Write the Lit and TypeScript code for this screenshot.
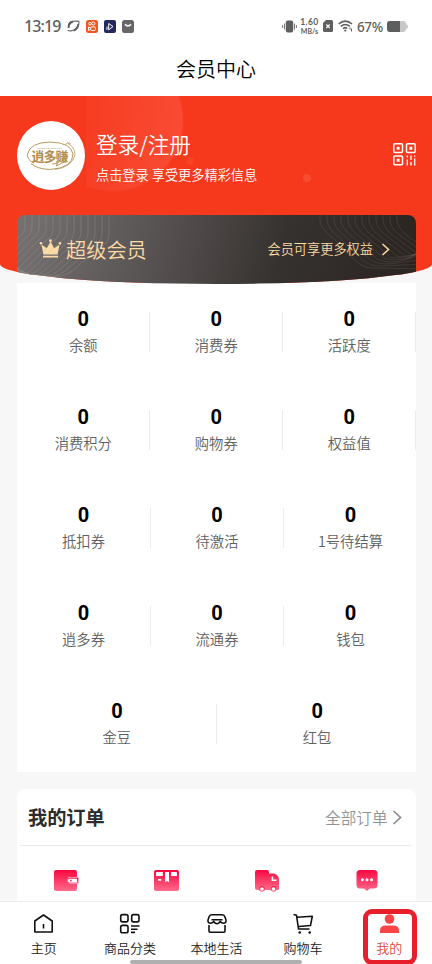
import { LitElement, html, css, svg } from "lit";
import { customElement } from "lit/decorators.js";
import { classMap } from "lit/directives/class-map.js";

const statRows: string[][] = [
  ["余额", "消费券", "活跃度"],
  ["消费积分", "购物券", "权益值"],
  ["抵扣券", "待激活", "1号待结算"],
  ["逍多券", "流通券", "钱包"],
  ["金豆", "红包"],
];

const orderIcons = [
  svg`<path d="M3 1H22Q24 1 24 3V8H17Q14.500 8 14.500 11.200Q14.500 14.500 17 14.500H24V20Q24 22 22 22H3Q1 22 1 20V3Q1 1 3 1Z"/><path d="M17 8.500H25.500V14.500H17Q14.600 14.500 14.600 11.500Q14.600 8.500 17 8.500Z"/><path class="cut" d="M16.200 9.800H24V13.400H16.200Q15 13.400 15 11.600Q15 9.800 16.200 9.800Z"/><rect x="17" y="10.800" width="1.700" height="1.700"/>`,
  svg`<path d="M3 1H24Q26 1 26 3V20Q26 22 24 22H3Q1 22 1 20V3Q1 1 3 1Z"/><path class="cut" d="M4 3H9.800V7H3V4Q3 3 4 3ZM12 3H16V13.200L14 12L12 13.200ZM18 3H23Q24 3 24 4V7H18ZM5 10H8.200V11.800H5Z"/>`,
  svg`<path d="M3 1H13Q15 1 15 3V4.500H20Q25 6 25 11V20Q25 21 24 21H3Q1 21 1 19V3Q1 1 3 1Z"/><circle cx="8" cy="20" r="2.800"/><circle cx="19.500" cy="20" r="2.800"/><circle class="cut" cx="8" cy="20" r="1.800"/><circle class="cut" cx="19.500" cy="20" r="1.800"/><path class="cut" d="M17.600 7.500H19.200V10.400H22.500V12H17.600Z"/>`,
  svg`<path d="M5 1H20Q23.500 1 23.500 4.500V16Q23.500 19.500 20 19.500H16L13 22L10 19.500H6Q2.500 19.500 2.500 16V4.500Q2.500 1 6 1Z"/><circle class="cut" cx="8.400" cy="10.700" r="1.500"/><circle class="cut" cx="13" cy="10.700" r="1.500"/><circle class="cut" cx="17.600" cy="10.700" r="1.500"/>`,
];

const tabs = [
  { label: "主页", icon: svg`<path d="M2.800 8L11.500 2L20.200 8V19H2.800ZM11.500 11V15.500"/>` },
  {
    label: "商品分类",
    icon: svg`<rect x="2.700" y="1.600" width="7.300" height="7.300" rx="1.800"/><rect x="13.700" y="1.600" width="7.300" height="7.300" rx="1.800"/><rect x="2.700" y="12.400" width="7.300" height="7.300" rx="1.800"/><path d="M13 13H21.500M13 16.200H19.500M13 19.400H17"/>`,
  },
  {
    label: "本地生活",
    icon: svg`<path d="M7 1.800H17Q19 1.800 19.800 3.500L21 7Q21.500 10 18.500 10.300Q16.500 10.300 15.200 8.500Q13.800 10.800 12 10.800Q10.200 10.800 8.800 8.500Q7.500 10.300 5.500 10.300Q2.500 10 3 7L4.200 3.500Q5 1.800 7 1.800ZM6.500 6.700H17.500M4 12V18Q4 19.200 5.200 19.200H18.800Q20 19.200 20 18V12"/>`,
  },
  {
    label: "购物车",
    icon: svg`<path d="M2.500 1.500L5.500 2.200L7.500 16H18.500M6 4.200L21.300 3.300L19.500 12.500L8 13.500"/><circle class="dot" cx="8.700" cy="19.500" r="1.300"/><circle class="dot" cx="18.700" cy="19.500" r="1.300"/>`,
  },
  { label: "我的", icon: svg`<circle class="dot" cx="12.500" cy="6" r="4.800"/><path class="dot" d="M3 20V17.500Q3 12.500 9 12.500H16Q22 12.500 22 17.500V20Z"/>`, active: true },
];

const waves = Array.from({ length: 13 }, (_, i) => {
  const d = i * 7;
  return svg`<path d="M${92 - d} -2V${20 - d * 0.1}Q${92 - d} ${27 - d * 0.1} ${84 - d} ${32 - d * 0.1}L${55 - d} 56Q${45 - d} 64 ${28 - d} 61L-4 ${58 - d * 0.5}"/>`;
});

const wavesRight = Array.from({ length: 12 }, (_, i) => {
  const d = i * 7;
  return svg`<path d="M${2 + d} -2V6Q${3 + d} 14 ${14 + d} 22L${38 + d} ${46 - d * 0.1}Q${46 + d} ${54 - d * 0.3} ${58 + d} ${53 - d * 0.3}L108 ${54 - d * 0.7}"/>`;
});

@customElement("app-root")
export class AppRoot extends LitElement {
  static styles = css`
    :host {
      display: flex;
      flex-direction: column;
      position: relative;
      width: 432px;
      height: 964px;
      overflow: hidden;
      background: #f7f7f7;
      font-family: "Noto Sans CJK SC", sans-serif;
      color: #000;
    }
    * { box-sizing: border-box; }
    svg { display: block; flex: none; }
    .status {
      flex: none;
      height: 51px;
      display: flex;
      align-items: center;
      padding: 1px 24px 0;
      background: #fff;
      color: #5e5e5e;
      font-family: Lato, sans-serif;
    }
    .time { font: 500 16px/20px "Noto Sans", sans-serif; width: 42.500px; letter-spacing: -0.900px; }
    .apps { display: flex; gap: 6px; flex: 1; align-items: center; }
    .speed { width: 21px; text-align: center; margin: 0 3px 0 2px; white-space: nowrap; }
    .speed span { display: block; }
    .speed .rate { font: 700 8.500px/9px Lato, sans-serif; letter-spacing: 0.400px; }
    .speed .unit { font: 700 7px/8px Lato, sans-serif; }
    .wifi { margin-left: 5px; }
    .percent { font: 500 13.500px/18px "Noto Sans", sans-serif; width: 26px; margin: 1px 4px 0 4px; letter-spacing: -0.400px; }
    .title {
      flex: none;
      height: 45px;
      background: #fff;
      text-align: center;
      font: 400 20px/36px "Noto Sans CJK SC DemiLight", "Noto Sans CJK SC", sans-serif;
    }
    .hero {
      flex: none;
      height: 187.500px;
      background:
        radial-gradient(circle 5px at 307px 82px, #f84c31 3.500px, transparent 4.500px),
        radial-gradient(circle 5px at 190px 65px, #f84329 3.500px, transparent 4.500px),
        linear-gradient(to right, #f6391d 86px, transparent 86px),
        radial-gradient(circle at 113px 25px, transparent 0, transparent 69px, #f6391d 71px),
        linear-gradient(100deg, #f6391d 60px, #f94c34 190px);
      border-radius: 0 0 50% 50% / 0 0 20px 20px;
      overflow: hidden;
      padding: 25px 16px 0 17px;
      color: #fff;
    }
    .user { display: flex; height: 94px; align-items: flex-start; }
    .logo { width: 68px; height: 69px; border-radius: 50%; background: #fff; flex: none; }
    .mark { font: 700 13px "Noto Sans CJK SC", sans-serif; fill: #b28d50; }
    .intro { flex: 1; padding: 7px 0 0 11px; }
    .login { font: 400 21.600px/32px "Noto Sans CJK SC DemiLight", "Noto Sans CJK SC", sans-serif; }
    .hint { font: 400 13.200px/20px "Noto Sans CJK SC DemiLight", "Noto Sans CJK SC", sans-serif; margin-top: 5px; }
    .qr { margin: 22px 0 0; }
    .vip {
      position: relative;
      height: 76px;
      border-radius: 8px;
      overflow: hidden;
      background: linear-gradient(104deg, #777272 0%, #5f5a5a 27%, #4c4746 46%, #36322f 65%, #2a2421 100%);
      display: flex;
      align-items: flex-start;
      color: #fcdba6;
      padding: 20px 26px 0 22px;
    }
    .wave { position: absolute; top: 0; fill: none; stroke: #b5aeb0; stroke-opacity: 0.240; }
    .wave.left { left: 0; }
    .wave.right { right: 0; stroke: #a0917f; stroke-opacity: 0.180; }
    .crown { margin-top: 3px; }
    .vip .name { font: 400 20.200px/30px "Noto Sans CJK SC DemiLight", "Noto Sans CJK SC", sans-serif; margin-left: 4px; flex: 1; position: relative; }
    .vip .more { font: 400 13.200px/28px "Noto Sans CJK SC DemiLight", "Noto Sans CJK SC", sans-serif; position: relative; }
    .vip .arrow { margin: 8px 0 0 8px; }
    .stats {
      flex: none;
      height: 489px;
      width: 399px;
      margin-left: 17px;
      background: #fff;
      margin-top: -0.500px;
    }
    .row { display: flex; height: 97.900px; padding-top: 24px; }
    .row.wide { margin-right: -1.500px; }
    .cell {
      flex: 1;
      display: flex;
      flex-direction: column;
      align-items: center;
      position: relative;
      padding-right: 0.500px;
    }
    .cell.ruled::after {
      content: "";
      position: absolute;
      right: 0;
      top: 5px;
      width: 1px;
      height: 40px;
      background: #ececec;
    }
    .num { font: 700 20px/24px Roboto, sans-serif; }
    .label { font: 400 14.300px/20px "Noto Sans CJK SC DemiLight", "Noto Sans CJK SC", sans-serif; margin-top: 4px; color: #606060; }
    .orders {
      flex: none;
      width: 399px;
      height: 112px;
      margin: 17px 0 0 17px;
      background: #fff;
      border-radius: 8px 8px 0 0;
    }
    .head {
      display: flex;
      align-items: center;
      height: 57px;
      margin: 0 5px 0 3px;
      padding: 0 9px 0 8px;
      border-bottom: 1px solid #ebebeb;
    }
    .head .name { flex: 1; font-size: 19.200px; font-weight: 700; color: #2c2c2c; line-height: 28px; }
    .head .all { font: 400 15.600px/24px "Noto Sans CJK SC DemiLight", "Noto Sans CJK SC", sans-serif; color: #939393; margin-right: 4.500px; }
    .kinds { display: flex; padding-top: 23px; margin: 0 -1px 0 -1px; }
    .kind { flex: 1; display: flex; justify-content: center; fill: url(#pink); }
    .cut { fill: #fff; }
    .tabs {
      flex: none;
      height: 63px;
      display: flex;
      background: #fff;
      border-top: 1px solid #ececec;
    }
    .tab { flex: 1; display: flex; flex-direction: column; align-items: center; padding-top: 11px; }
    .tab svg { fill: none; stroke: #111; stroke-width: 1.600; stroke-linejoin: round; }
    .tab .dot { fill: #111; stroke: none; }
    .tab .text { font: 400 13px/20px "Noto Sans CJK SC DemiLight", "Noto Sans CJK SC", sans-serif; margin: 4px 0 0 1px; color: #222; }
    .tab.active .dot { fill: #fb4446; }
    .tab.active .text { color: #d94b38; }
    .frame {
      position: absolute;
      left: 363px;
      top: 909px;
      width: 54px;
      height: 56px;
      border: 5px solid #e71f2b;
      border-radius: 9px;
    }
    .pill {
      position: absolute;
      left: 130px;
      top: 960px;
      width: 172px;
      height: 3.500px;
      border-radius: 2px;
      background: #b0b0b0;
    }
  `;

  private statusBar() {
    return html`<div class="status">
      <span class="time">13:19</span>
      <div class="apps">
        <svg width="13" height="12" viewBox="0 0 13 12" fill="none" stroke="#5e5e5e">
          <path d="M1.500 7.500Q.8 1.500 6.500 1.200Q9.500 1 11.800 1.200Q12.500 4 10 7.200Q7.500 10.700 4 10.900Q1 11.200 1 10" stroke-width="1.100" />
          <path d="M1.500 8Q1.500 3 6 1.500M11.300 4Q11.500 8.500 6.500 10.700" stroke-width="1.900" />
        </svg>
        <svg width="12" height="13" viewBox="0 0 12 13" fill="none" stroke="#fff">
          <rect width="12" height="13" rx="2.500" fill="#f15522" stroke="none" />
          <circle cx="4" cy="3.700" r="1.300" /><circle cx="7.300" cy="3.500" r="1.600" />
          <rect x="4.700" y="6.800" width="4.600" height="3.700" rx="1" /><path d="M4.500 8L2.500 7V10.500L4.500 9.500" />
        </svg>
        <svg width="12" height="13" viewBox="0 0 12 13" fill="none" stroke="#fff">
          <rect width="12" height="13" rx="2" fill="#25285a" stroke="none" />
          <path d="M4.700 9.800V3.500L9 6.500L4.700 9.800M3 6.500V10" />
        </svg>
        <svg width="12" height="13" viewBox="0 0 12 13" fill="none" stroke="#fff">
          <rect width="12" height="13" rx="2.500" fill="#666" stroke="none" />
          <path d="M3 4.300Q6 7.800 9 4.300" stroke-width="1.500" />
        </svg>
      </div>
      <svg width="15" height="13" viewBox="0 0 15 13" fill="none" stroke="#777">
        <rect x="3.800" y=".5" width="7.400" height="12" rx="2" fill="#5e5e5e" stroke="none" />
        <path d="M2.500 3.500V9.500M.6 5V8M12.500 3.500V9.500M14.400 5V8" />
      </svg>
      <div class="speed"><span class="rate">1.60</span><span class="unit">MB/s</span></div>
      <svg width="10" height="12" viewBox="0 0 10 12" fill="none" stroke="#fff" stroke-width="1.100">
        <path d="M3 0H8.500Q10 0 10 1.500V10.500Q10 12 8.500 12H1.500Q0 12 0 10.500V3Z" fill="#5e5e5e" stroke="none" />
        <path d="M3.300 4.500L6.700 8M6.700 4.500L3.300 8" />
      </svg>
      <svg class="wifi" width="15" height="12" viewBox="0 0 15 12" fill="none" stroke="#5e5e5e" stroke-width="1.500">
        <path d="M.6 4Q7.300 -1.800 14 4M2.800 6.400Q7.300 2.600 11.800 6.400M5 8.600Q7.300 6.800 9.200 8.400" />
        <circle cx="7.300" cy="10.600" r="1.100" fill="#5e5e5e" stroke="none" />
        <path d="M12 7.500V9.500M13.500 8.500V11.500" stroke-width="1" />
      </svg>
      <span class="percent">67%</span>
      <svg width="21" height="11" viewBox="0 0 21 11">
        <rect width="19" height="11" rx="3" fill="#c8c8c8" />
        <path d="M3 0H13V11H3Q0 11 0 8V3Q0 0 3 0Z" fill="#5e5e5e" /><path d="M19 3L21 4.500V6.500L19 8Z" fill="#c8c8c8" />
      </svg>
    </div>`;
  }

  render() {
    return html`
      ${this.statusBar()}
      <div class="title">会员中心</div>
      <div class="hero">
        <div class="user">
          <svg class="logo" viewBox="0 0 68 69">
            <g fill="none" stroke="#b9985f">
              <path d="M17 42Q10 39 10.500 33Q13 21.500 33 21Q54 21.500 56 33Q56 47 33 48.500Q20 48 14 42.500" />
              <path d="M50.500 22Q58 26 58 34Q55 46 38 48.500M48.500 24L50.500 21.500L53.500 22.500" stroke-width=".8" />
              <path d="M20 27.500H45" stroke="#c9b083" stroke-dasharray="1.500 .7" stroke-opacity=".7" />
            </g>
            <text class="mark" x="14.500" y="40" textLength="37">逍多赚</text>
            <path d="M35 43Q42 43 44 38Q40 42 39 45Q44 43 50 39" fill="none" stroke="#b28d50" stroke-width=".9" />
          </svg>
          <div class="intro">
            <div class="login">登录/注册</div>
            <div class="hint">点击登录 享受更多精彩信息</div>
          </div>
          <svg class="qr" width="23" height="23" viewBox="0 0 23 23" fill="none" stroke="#fff" stroke-width="1.500">
            <rect x=".8" y=".8" width="8.700" height="8.700" rx="1" /><rect x="13.500" y=".8" width="8.700" height="8.700" rx="1" />
            <rect x=".8" y="13" width="8.700" height="8.700" rx="1" />
            <path d="M3.700 5.150H6.600M16.400 5.150H19.300M3.700 17.350H6.600" stroke-width="3" />
            <path d="M14.300 12.500V14.500M14.300 16.500V22.500M18 12.500V17M18 19V22.500M21.700 12.500V13.800M21.700 15.500V22.500" stroke-width="1.300" />
          </svg>
        </div>
        <div class="vip">
          <svg class="wave left" width="100" height="76">${waves}</svg>
          <svg class="wave right" width="98" height="76">${wavesRight}</svg>
          <svg class="crown" width="23" height="21" viewBox="0 0 23 21" fill="#fcdba6">
            <path d="M2.500 6.500L7.800 10.200L11.500 3.500L15.200 10.200L20.500 6.500L18.600 16.500H4.400ZM4 17.800H19V19.400H4Z" />
            <circle cx="11.500" cy="2.700" r="1.400" /><circle cx="2" cy="5.300" r="1.300" /><circle cx="21" cy="5.300" r="1.300" />
          </svg>
          <span class="name">超级会员</span>
          <span class="more">会员可享更多权益</span>
          <svg class="arrow" width="9" height="13" viewBox="0 0 9 13" fill="none" stroke="#fcdba6" stroke-width="1.600"><path d="M1.500 1L7.500 6.500L1.500 12" /></svg>
        </div>
      </div>
      <div class="stats">
        ${statRows.map(
          (row, r) => html`<div class=${classMap({ row: true, wide: r >= 2 })}>
            ${row.map(
              (label, i) => html`<div class=${classMap({ cell: true, ruled: r < 2 || i < row.length - 1 })}>
                <span class="num">0</span><span class="label">${label}</span>
              </div>`
            )}
          </div>`
        )}
      </div>
      <div class="orders">
        <div class="head">
          <span class="name">我的订单</span>
          <span class="all">全部订单</span>
          <svg width="10" height="15" viewBox="0 0 10 15" fill="none" stroke="#8c8c8c" stroke-width="1.700"><path d="M1.500 1L8.500 7.500L1.500 14" /></svg>
        </div>
        <div class="kinds">
          ${orderIcons.map(
            (icon) => html`<div class="kind">
              <svg width="26" height="24" viewBox="0 0 26 24">
                <defs><linearGradient id="pink" x1="0" y1="0" x2="0" y2="1"><stop stop-color="#f7083f" /><stop offset="1" stop-color="#ff6a8b" /></linearGradient></defs>
                ${icon}
              </svg>
            </div>`
          )}
        </div>
      </div>
      <div class="tabs">
        ${tabs.map(
          (t) => html`<div class=${classMap({ tab: true, active: !!t.active })}>
            <svg width="23" height="21" viewBox="0 0 23 21">${t.icon}</svg>
            <span class="text">${t.label}</span>
          </div>`
        )}
      </div>
      <div class="pill"></div>
      <div class="frame"></div>
    `;
  }
}
